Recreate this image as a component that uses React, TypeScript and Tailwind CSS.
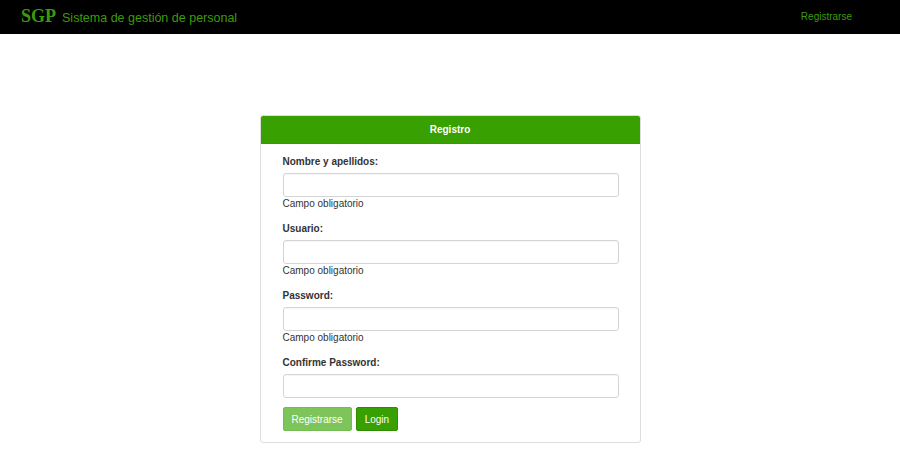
import React from 'react';

const fields = [
  { label: 'Nombre y apellidos:', type: 'text', help: true },
  { label: 'Usuario:', type: 'text', help: true },
  { label: 'Password:', type: 'password', help: true },
  { label: 'Confirme Password:', type: 'password', help: false },
];

export default function App() {
  return (
    <div className="min-h-screen bg-white text-[#333] font-['Liberation_Sans',Arial,sans-serif]">
      {/* navbar */}
      <nav className="h-[34px] bg-black flex items-center justify-between pl-[21px] pr-[48px] pb-[2px]">
        <div className="flex items-baseline gap-[6px] text-[#3c9b0b]">
          <span className="font-['Liberation_Serif','Times_New_Roman',serif] font-bold text-[18px]">SGP</span>
          <span className="text-[12.5px]">Sistema de gestión de personal</span>
        </div>
        <a className="text-[10px] text-[#3c9b0b]">Registrarse</a>
      </nav>

      <div className="flex justify-center pt-[81px]">
        <div className="w-[381px] border border-[#ddd] rounded-[3px] overflow-hidden">
          <div className="h-[28px] bg-[#38a000] border-b border-[#36990a] flex items-center justify-center text-white text-[10px] font-bold">
            Registro
          </div>
          <form className="pl-[22px] pr-[21px] pt-[11px] pb-[11px]">
            {fields.map((f) => (
              <div key={f.label} className="mb-[11px]">
                <label className="block text-[10px] leading-[14px] font-bold mb-[4px]">{f.label}</label>
                <input
                  type={f.type}
                  className="block w-full h-[24px] border border-[#d4d4d4] rounded-[3px] px-2 text-[10px] bg-white outline-none shadow-[inset_0_1px_1px_rgba(0,0,0,0.04)]"
                />
                {f.help && <p className="text-[10px] leading-[14px]">Campo obligatorio</p>}
              </div>
            ))}
            <div className="flex gap-[4px] -mt-[2px]">
              <button
                type="button"
                className="h-[24px] px-[8px] text-[10px] text-white bg-[#7dc45b] border border-[#74bd52] rounded-[2px]"
              >
                Registrarse
              </button>
              <button
                type="button"
                className="h-[24px] px-[8px] text-[10px] text-white bg-[#38a000] border border-[#2f8c00] rounded-[2px]"
              >
                Login
              </button>
            </div>
          </form>
        </div>
      </div>
    </div>
  );
}
